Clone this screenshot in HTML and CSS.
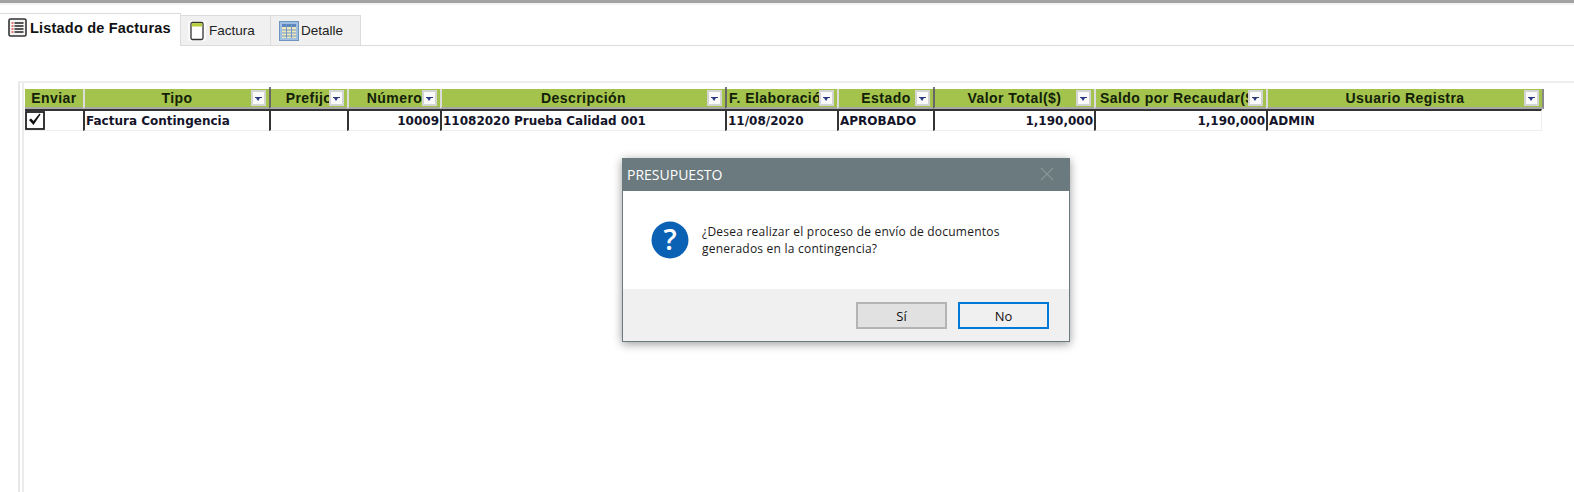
FILE: index.html
```html
<!DOCTYPE html>
<html lang="es">
<head>
  <meta charset="UTF-8">
  <title>Listado de Facturas</title>
  <link rel="stylesheet" href="styles.css">
</head>
<body>
  <div class="topbar"></div>

  <div class="tabs">
    <div class="tab active">
      <svg class="tab-icon" width="20" height="20" viewBox="0 0 20 20">
        <rect x="1" y="1" width="17" height="17" rx="1.500" fill="#f4f4f4" stroke="#333" stroke-width="1.600"/>
        <path d="M3.500 5h2M3.500 8h2M3.500 11h2M3.500 14h2" stroke="#e0504a" stroke-width="1.300"/>
        <path d="M6.500 5h9M6.500 8h9M6.500 11h9M6.500 14h9" stroke="#222" stroke-width="1.300"/>
      </svg>
      <span>Listado de Facturas</span>
    </div>
    <div class="tab">
      <svg class="tab-icon" width="20" height="20" viewBox="0 0 20 20">
        <rect x="1" y="0" width="18" height="20" fill="#fafafa"/>
        <rect x="4" y="1.500" width="12" height="17" rx="1.500" fill="#fff" stroke="#333" stroke-width="1.300"/>
        <rect x="4.700" y="2.200" width="10.600" height="3.300" fill="#b5cf3c"/>
      </svg>
      <span>Factura</span>
    </div>
    <div class="tab">
      <svg class="tab-icon" width="20" height="20" viewBox="0 0 20 20">
        <rect x="0.500" y="0.500" width="19" height="19" fill="#9fc0e0" stroke="#6c94bc"/>
        <rect x="3" y="3" width="14" height="14" fill="#f0e8b8"/>
        <path d="M3 3h14v3H3z" fill="#5b86c0"/>
        <path d="M3 9h14M3 12h14M3 15h14M7.500 3v14M12.500 3v14" stroke="#6f97c8"/>
      </svg>
      <span>Detalle</span>
    </div>
  </div>

  <div class="panel">
    <div class="grid">
      <div class="hcell first"><span class="hlabel">Enviar</span></div>
      <div class="hcell"><span class="hlabel">Tipo</span><span class="filter"></span></div>
      <div class="hcell dark"><span class="hlabel">Prefijo</span><span class="filter"></span></div>
      <div class="hcell"><span class="hlabel">Número</span><span class="filter"></span></div>
      <div class="hcell"><span class="hlabel">Descripción</span><span class="filter"></span></div>
      <div class="hcell dark"><span class="hlabel clip">F. Elaboración</span><span class="filter"></span></div>
      <div class="hcell"><span class="hlabel">Estado</span><span class="filter"></span></div>
      <div class="hcell dark"><span class="hlabel">Valor Total($)</span><span class="filter"></span></div>
      <div class="hcell"><span class="hlabel clip saldo">Saldo por Recaudar($)</span><span class="filter"></span></div>
      <div class="hcell last"><span class="hlabel">Usuario Registra</span><span class="filter"></span></div>

      <div class="cell first">
        <svg class="check" width="20" height="19" viewBox="0 0 20 19">
          <rect x="1" y="1" width="18" height="17" fill="#fff" stroke="#222" stroke-width="1.800"/>
          <path d="M4 9l2-1.500 2.500 2.500 6-7.500 1 1-7 10.500z" fill="#111"/>
        </svg>
      </div>
      <div class="cell">Factura Contingencia</div>
      <div class="cell"></div>
      <div class="cell num">10009</div>
      <div class="cell">11082020 Prueba Calidad 001</div>
      <div class="cell">11/08/2020</div>
      <div class="cell">APROBADO</div>
      <div class="cell num">1,190,000</div>
      <div class="cell num">1,190,000</div>
      <div class="cell plain">ADMIN</div>
    </div>
  </div>

  <div class="dialog">
    <div class="dialog-title">
      <span>PRESUPUESTO</span>
      <svg width="14" height="14" viewBox="0 0 14 14">
        <path d="M1 1l12 12M13 1L1 13" stroke="#8b9698" stroke-width="1.100"/>
      </svg>
    </div>
    <div class="dialog-body">
      <svg class="dialog-icon" width="38" height="38" viewBox="0 0 38 38">
        <circle cx="19" cy="19" r="18.500" fill="#0b62b4"/>
        <text x="19" y="28.500" text-anchor="middle" class="qmark">?</text>
      </svg>
      <p>¿Desea realizar el proceso de envío de documentos generados en la contingencia?</p>
    </div>
    <div class="dialog-actions">
      <button class="btn">Sí</button>
      <button class="btn default">No</button>
    </div>
  </div>
</body>
</html>
```

FILE: styles.css
```css
* {
  box-sizing: border-box;
}

html, body {
  height: 100%;
}

body {
  margin: 0;
  background: #fff;
  overflow: hidden;
  display: flex;
  flex-direction: column;
  font-family: "DejaVu Sans", sans-serif;
  color: #111;
}

.topbar {
  height: 5px;
  flex: none;
  background: #fff;
  border-top: 3px solid #a2a2a2;
  border-bottom: 2px solid #f4f4f4;
}

/* tabs */
.tabs {
  flex: none;
  display: flex;
  align-items: flex-end;
  height: 41px;
  border-bottom: 1px solid #dcdcdc;
}

.tab {
  display: flex;
  align-items: center;
  gap: 2px;
  height: 31px;
  background: #f0f0f0;
  border: 1px solid #dcdcdc;
  border-left: 0;
  font-family: "Liberation Sans", sans-serif;
  font-size: 13.500px;
  color: #222;
  margin-bottom: -1px;
}

.tab-icon {
  flex: none;
}

.tab.active {
  height: 33px;
  width: 181px;
  background: #fff;
  border-bottom: 0;
  padding: 0 0 4px 8px;
  font-size: 14.500px;
  font-weight: bold;
  letter-spacing: 0.2px;
  color: #111;
}

.tab:nth-child(2) {
  width: 90px;
  padding-left: 6px;
}

.tab:nth-child(3) {
  width: 90px;
  padding-left: 8px;
}

/* panel around the grid */
.panel {
  flex: 1;
  margin: 35px 0 0 18px;
  padding: 6px 0 0 5px;
  border-top: 2px solid #eee;
  border-left: 2px solid #e8e8e8;
  position: relative;
}

.panel::before {
  content: "";
  display: block;
  position: absolute;
  left: 2px;
  top: 0;
  bottom: 0;
  width: 2px;
  background: #ececec;
}

.grid {
  display: grid;
  grid-template-columns: 58px 186px 78px 93px 285px 112px 96px 161px 172px 276px;
  grid-template-rows: 20px 22px;
  width: 1517px;
  font-size: 12px;
  font-weight: bold;
}

.hcell {
  position: relative;
  display: flex;
  align-items: center;
  background: #a3c34c;
  border-left: 2px solid #dcdcdc;
  border-bottom: 2px solid #a8a8a8;
  font-family: "Liberation Sans", sans-serif;
  font-size: 14px;
  letter-spacing: 0.45px;
  color: #122008;
}

.hcell.first {
  border-left: 0;
}

.hcell.dark {
  border-left-color: #666;
}

.hcell.dark::before {
  content: "";
  position: absolute;
  left: -2px;
  top: -2px;
  width: 2px;
  height: 2px;
  background: #777;
}

.hcell.last {
  border-right: 2px solid #888;
  margin-right: -2px;
}

.hlabel {
  flex: 1;
  text-align: center;
  white-space: nowrap;
  overflow: hidden;
}

.hlabel.clip {
  text-align: left;
  padding-left: 2px;
}

.hlabel.saldo {
  padding-left: 4px;
}

/* filter button lies over the end of the caption */
.filter {
  position: absolute;
  right: 3px;
  top: 1px;
  width: 15px;
  height: 16px;
  background: #fafafa;
  border: 2px solid #d4d4d4;
}

.filter::before {
  content: "";
  position: absolute;
  left: 2px;
  top: 5px;
  width: 7px;
  height: 1px;
  background: #2e3a80;
}

.filter::after {
  content: "";
  position: absolute;
  left: 3px;
  top: 6px;
  border-left: 2.500px solid transparent;
  border-right: 2.500px solid transparent;
  border-top: 3px solid #2e3a80;
}

.cell {
  display: flex;
  align-items: center;
  height: 22px;
  padding: 0 1px;
  overflow: hidden;
  white-space: nowrap;
  background: #fff;
  border-top: 2px solid #333;
  border-bottom: 1px solid #eee;
  border-left: 2px solid #333;
  color: #14142a;
}

.cell.first {
  border-left: 0;
  padding: 0;
}

.cell.num {
  justify-content: flex-end;
}

.cell.plain {
  border-right: 1px solid #eee;
}

/* message box */
.dialog {
  position: absolute;
  left: 622px;
  top: 158px;
  width: 448px;
  height: 184px;
  display: flex;
  flex-direction: column;
  background: #fff;
  border: 1px solid #6b7a7e;
  box-shadow: 0 2px 9px rgba(0, 0, 0, 0.4);
  font-family: "Open Sans", sans-serif;
}

.dialog-title {
  flex: none;
  height: 32px;
  display: flex;
  align-items: center;
  justify-content: space-between;
  padding: 0 15px 2px 4px;
  background: #6b7a7e;
  color: #fff;
  font-size: 14px;
}

.dialog-body {
  flex: 1;
  display: flex;
  align-items: center;
  gap: 13px;
  padding: 0 28px 0 28px;
}

.dialog-icon {
  flex: none;
  overflow: visible;
}

.dialog-body p {
  margin: 0;
  font-size: 12px;
  line-height: 17px;
  letter-spacing: 0.23px;
  color: #1a1a1a;
}

.qmark {
  font-family: "Open Sans", sans-serif;
  font-size: 29px;
  font-weight: 600;
  fill: #fff;
}

.dialog-actions {
  flex: none;
  height: 52px;
  display: flex;
  justify-content: flex-end;
  align-items: flex-start;
  gap: 11px;
  padding: 13px 20px 0 0;
  background: #f0f0f0;
}

.btn {
  width: 91px;
  height: 27px;
  font-family: "Open Sans", sans-serif;
  font-size: 13px;
  color: #111;
  background: #e1e1e1;
  border: 2px solid #b4b4b4;
  padding: 0;
}

.btn.default {
  background: #f0f0f0;
  border-color: #0078d7;
}
```
